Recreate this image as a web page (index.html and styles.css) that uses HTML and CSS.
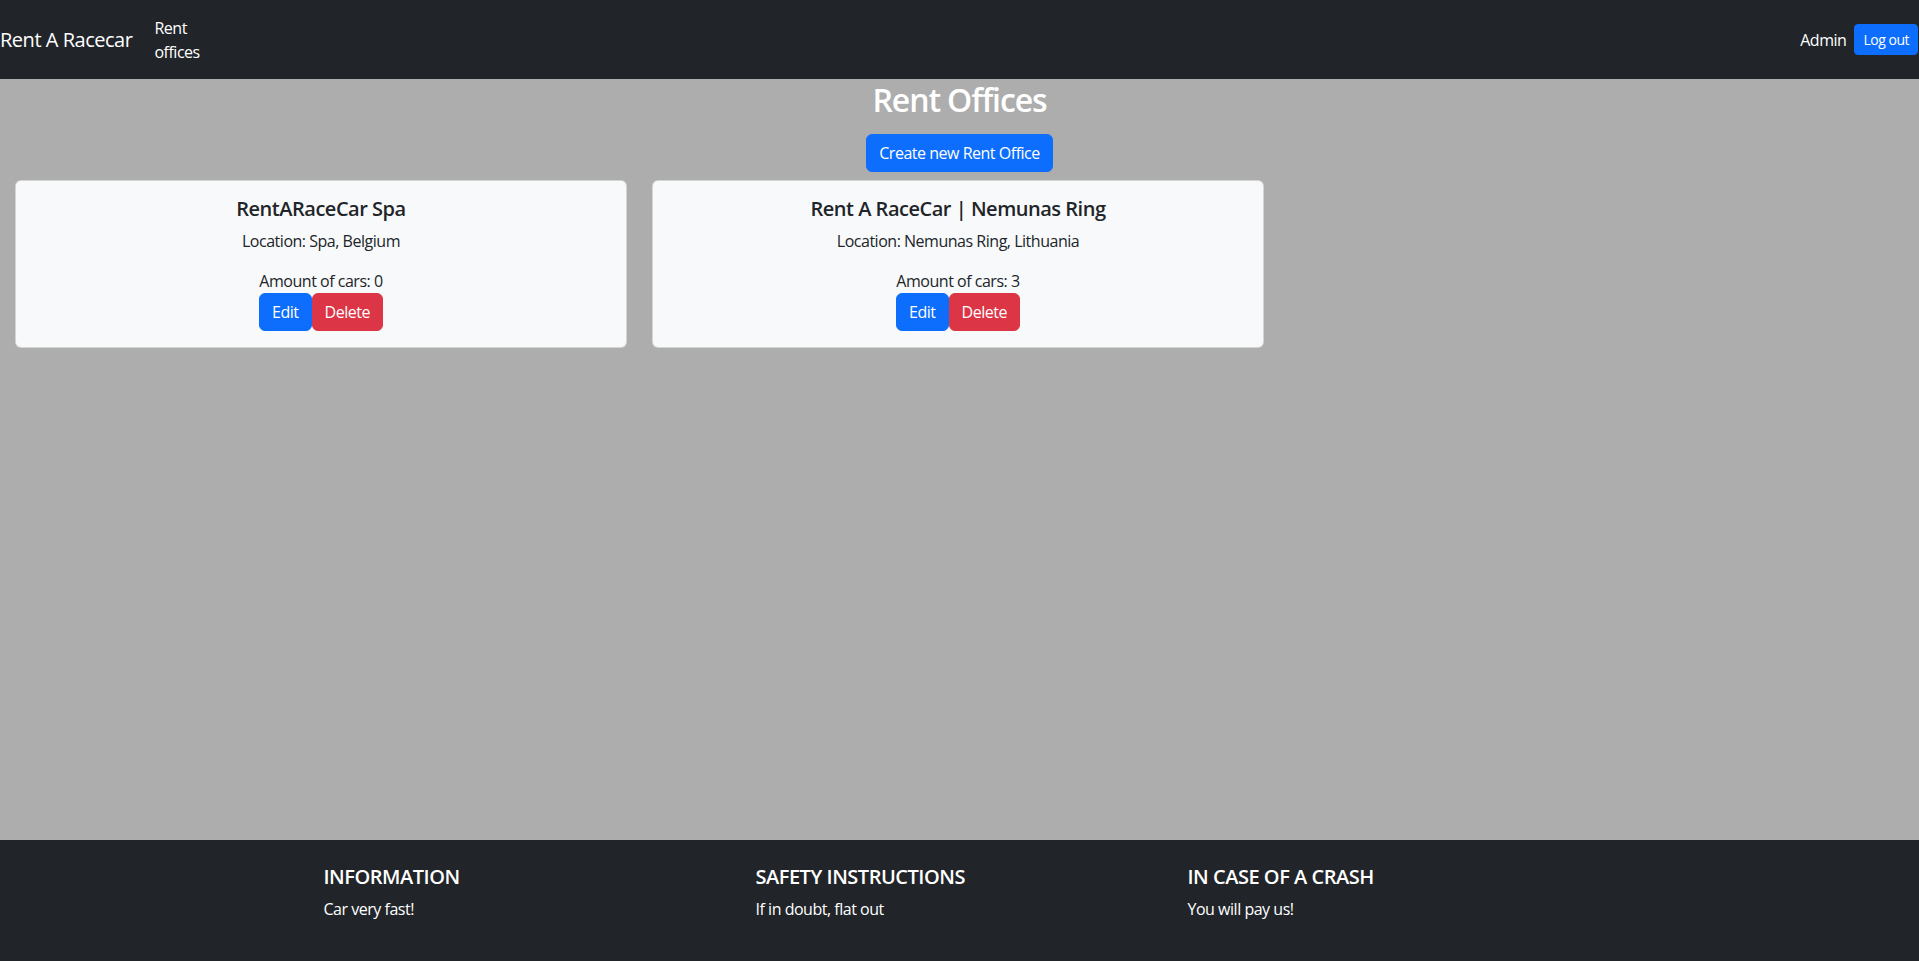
FILE: index.html
```html
<!DOCTYPE html>
<html lang="en">
<head>
<meta charset="utf-8">
<title>Rent A Racecar</title>
<link rel="stylesheet" href="styles.css">
</head>
<body>
<nav class="navbar">
  <div class="nav-left">
    <a class="brand" href="#">Rent A Racecar</a>
    <a class="nav-link" href="#">Rent offices</a>
  </div>
  <div class="nav-right">
    <span class="user">Admin</span>
    <button class="btn btn-primary btn-sm">Log out</button>
  </div>
</nav>
<main class="main">
  <h2 class="page-title">Rent Offices</h2>
  <div class="create-wrap"><button class="btn btn-primary">Create new Rent Office</button></div>
  <div class="cards">
    <div class="card">
      <h5 class="card-title">RentARaceCar Spa</h5>
      <p class="card-text">Location: Spa, Belgium</p>
      <div class="card-count">Amount of cars: 0</div>
      <div class="card-actions"><button class="btn btn-primary">Edit</button><button class="btn btn-danger">Delete</button></div>
    </div>
    <div class="card">
      <h5 class="card-title">Rent A RaceCar | Nemunas Ring</h5>
      <p class="card-text">Location: Nemunas Ring, Lithuania</p>
      <div class="card-count">Amount of cars: 3</div>
      <div class="card-actions"><button class="btn btn-primary">Edit</button><button class="btn btn-danger">Delete</button></div>
    </div>
  </div>
</main>
<footer class="footer">
  <div class="footer-inner">
    <div class="footer-col">
      <h5 class="footer-title">INFORMATION</h5>
      <p class="footer-text">Car very fast!</p>
    </div>
    <div class="footer-col">
      <h5 class="footer-title">SAFETY INSTRUCTIONS</h5>
      <p class="footer-text">If in doubt, flat out</p>
    </div>
    <div class="footer-col">
      <h5 class="footer-title">IN CASE OF A CRASH</h5>
      <p class="footer-text">You will pay us!</p>
    </div>
  </div>
</footer>
</body>
</html>
```
FILE: styles.css
```css
* { box-sizing: border-box; }
html, body { margin: 0; padding: 0; }
body {
  font-family: "Open Sans", "Noto Sans", sans-serif;
  font-size: 16px;
  line-height: 1.5;
  letter-spacing: -0.03em;
  color: #212529;
  background: #adadad;
  min-height: 100vh;
  display: flex;
  flex-direction: column;
}
a { text-decoration: none; }

.navbar {
  background: #212529;
  height: 79px;
  display: flex;
  align-items: center;
  justify-content: space-between;
}
.nav-left { display: flex; align-items: center; }
.brand {
  color: #fff;
  font-size: 20px;
  line-height: 30px;
  margin-right: 14px;
  padding: 5px 0;
}
.nav-link {
  color: #fff;
  width: min-content;
  padding: 8px 8px;
  font-size: 16px;
  line-height: 24px;
}
.nav-right { display: flex; align-items: center; gap: 8px; margin-right: 1px; }
.user { color: #fff; }

.btn {
  font-family: inherit;
  letter-spacing: inherit;
  border: 1px solid transparent;
  border-radius: 6px;
  padding: 6px 12px;
  font-size: 16px;
  line-height: 24px;
  color: #fff;
  cursor: pointer;
}
.btn-sm { padding: 4px 8px; font-size: 14px; line-height: 21px; border-radius: 4px; }
.btn-primary { background: #0d6efd; border-color: #0d6efd; }
.btn-danger { background: #dc3545; border-color: #dc3545; }

.main { flex: 1; }
.page-title {
  margin: 2px 0 15px;
  text-align: center;
  color: #fff;
  font-size: 32px;
  font-weight: 600;
  line-height: 38px;
  letter-spacing: -0.035em;
}
.create-wrap { text-align: center; margin-bottom: 8px; }

.cards {
  display: grid;
  grid-template-columns: repeat(3, 612px);
  column-gap: 25px;
  padding-left: 15px;
}
.card {
  background: #f8f9fa;
  border: 1px solid rgba(0,0,0,0.15);
  border-radius: 6px;
  padding: 16px;
  text-align: center;
}
.card-title {
  margin: 0 0 8px;
  font-size: 20px;
  font-weight: 600;
  line-height: 24px;
}
.card-text { margin: 0 0 16px; }
.card-actions { display: flex; justify-content: center; }

.footer { background: #212529; color: #fff; }
.footer-inner {
  width: 1296px;
  margin: 0 auto;
  display: grid;
  grid-template-columns: repeat(3, 1fr);
  padding: 25px 0 24px;
}
.footer-col { padding: 0 12px; }
.footer-title {
  margin: 0 0 8px;
  font-size: 20px;
  font-weight: 600;
  line-height: 24px;
}
.footer-text { margin: 0 0 16px; }
```
